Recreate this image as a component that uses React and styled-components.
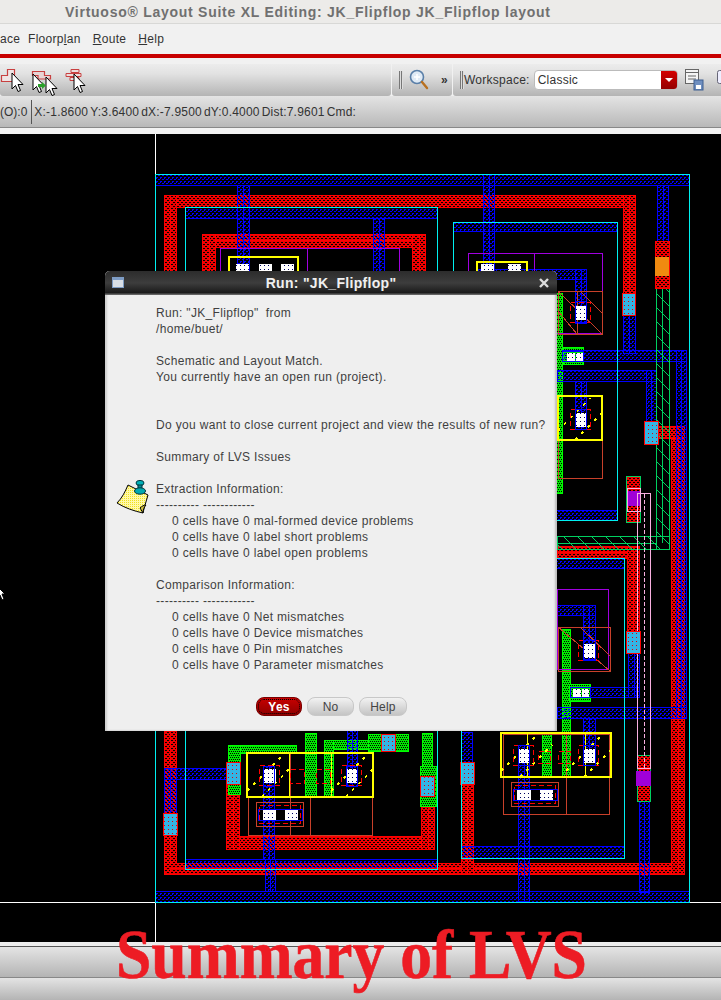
import styled, { createGlobalStyle } from "styled-components";

const GlobalStyle = createGlobalStyle`
  html, body {
    margin: 0;
    padding: 0;
    background: #000;
    overflow: hidden;
  }
`;

const Page = styled.div`
  position: relative;
  width: 721px;
  height: 1000px;
  overflow: hidden;
  display: flex;
  flex-direction: column;
  background: #f1f1f1;
  font-family: "Liberation Sans", Arial, sans-serif;
  color: #3c3c3c;
`;

const TitleBar = styled.div`
  height: 23px;
  background: #ecebe9;
  border-bottom: 1px solid #d8d8d6;
  display: flex;
  align-items: center;
  padding-left: 65px;
  font-size: 14px;
  font-weight: 700;
  letter-spacing: 0.74px;
  color: #707070;
  white-space: nowrap;
`;

const MenuBar = styled.div`
  height: 29px;
  background: #f1f1f1;
  display: flex;
  align-items: center;
  gap: 12px;
  font-size: 12px;
  letter-spacing: 0.3px;
  color: #333;
`;

const MenuItem = styled.span`
  &:first-child { width: 16px; }
  u { text-underline-offset: 1px; }
`;

const RedRule = styled.div`
  height: 4px;
  margin-top: 1px;
  background: #c80000;
`;

const ToolStrip = styled.div`
  height: 32px;
  margin-top: 6px;
  display: flex;
  gap: 1px;
  background: #f1f1f1;
`;

const ToolGroup = styled.div`
  width: ${(p) => p.$width}px;
  flex: ${(p) => (p.$grow ? 1 : "none")};
  box-sizing: border-box;
  background: linear-gradient(#ececec, #e2e2e2 30%, #b4b4b4);
  border-radius: 0 0 3px 3px;
  display: flex;
  align-items: center;
  gap: ${(p) => p.$gap || 0}px;
  padding-left: ${(p) => p.$pad || 0}px;
  font-size: 12px;
  letter-spacing: 0.25px;
  color: #333;
`;

const Grip = styled.span`
  width: 4px;
  height: 18px;
  flex: none;
  background: repeating-linear-gradient(90deg, #777 0 1px, #ddd 1px 2px);
`;

const Overflow = styled.span`
  margin-left: 6px;
  font-weight: 700;
`;

const Combo = styled.div`
  width: 144px;
  height: 20px;
  margin-left: 4px;
  margin-right: 6px;
  background: #fff;
  border: 1px solid #bbb;
  border-radius: 4px;
  box-sizing: border-box;
  display: flex;
  align-items: center;
  justify-content: space-between;
  padding-left: 3px;
  overflow: hidden;
  flex: none;
`;

const ComboArrow = styled.span`
  width: 16px;
  height: 20px;
  background: linear-gradient(#d80000, #900000);
  display: flex;
  align-items: center;
  justify-content: center;
  &::after {
    content: "";
    border-left: 4px solid transparent;
    border-right: 4px solid transparent;
    border-top: 4px solid #fff;
  }
`;

const StatusBar = styled.div`
  height: 32px;
  box-sizing: border-box;
  background: linear-gradient(#e4e4e4, #b8b8b8);
  border-bottom: 1px solid #888;
  display: flex;
  align-items: center;
  font-size: 12px;
  letter-spacing: 0.2px;
  white-space: nowrap;
  color: #333;
`;

const StatusCell = styled.span`
  margin-right: 2px;
  ${(p) => p.$divided && "border-right: 1px solid #555; padding-right: 4px; height: 24px; line-height: 24px; letter-spacing: 0;"}
`;

const Gap = styled.div`
  height: 6px;
  background: #f2f2f2;
`;

const Canvas = styled.svg`
  display: block;
  width: 721px;
  height: 808px;
  background: #000;
  flex: none;
`;

const BottomBars = styled.div`
  flex: 1;
  display: flex;
  flex-direction: column;
  background: #ececec;
  padding-top: 4px;
`;

const BottomBar = styled.div`
  flex: ${(p) => p.$size} 0 0;
  background: linear-gradient(#e4e4e4, #b4b4b4);
  border-top: 1px solid ${(p) => p.$line};
`;

const Dialog = styled.div`
  position: absolute;
  left: 105px;
  top: 271px;
  width: 452px;
  height: 460px;
  display: flex;
  flex-direction: column;
  background: #efefef;
  border-radius: 5px 5px 0 0;
  overflow: hidden;
  box-shadow: inset -2px 0 2px #bdbdbd, inset 2px 0 2px #cfcfcf;
`;

const DialogHead = styled.div`
  height: 24px;
  flex: none;
  background: linear-gradient(#2c2c2c, #3d3d3d 50%, #1b1b1b 90%, #777);
  display: flex;
  align-items: center;
  justify-content: center;
  position: relative;
  font-size: 14px;
  font-weight: 700;
  letter-spacing: 0.3px;
  color: #f0f0f0;
`;

const WindowGlyph = styled.span`
  position: absolute;
  left: 7px;
  top: 6px;
  width: 12px;
  height: 11px;
  border: 1px solid #7e9cc4;
  border-top-width: 3px;
  box-sizing: border-box;
  background: #d9dfe6;
`;

const CloseGlyph = styled.svg`
  position: absolute;
  right: 8px;
  top: 7px;
`;

const DialogBody = styled.div`
  flex: 1;
  position: relative;
  padding: 10px 0 0 51px;
`;

const NoteIcon = styled.svg`
  position: absolute;
  left: 11px;
  top: 183px;
`;

const Message = styled.div`
  font: 12px/16px "Liberation Sans", Arial, sans-serif;
  letter-spacing: 0.33px;
  color: #3f3f3f;
`;

const MessageLine = styled.div`
  height: 16px;
  white-space: pre;
  padding-left: ${(p) => (p.$indent ? 16 : 0)}px;
`;

const ButtonRow = styled.div`
  height: 44px;
  flex: none;
  display: flex;
  gap: 5px;
  padding-left: 151px;
  padding-top: 10px;
  box-sizing: border-box;
`;

const Btn = styled.button`
  width: ${(p) => p.$width}px;
  height: 19px;
  padding: 0;
  border-radius: 8px;
  font: ${(p) => (p.$primary ? "700" : "400")} 12px "Liberation Sans", Arial, sans-serif;
  letter-spacing: 0.2px;
  color: ${(p) => (p.$primary ? "#fff" : "#444")};
  background: ${(p) => (p.$primary ? "linear-gradient(#c80000, #8e0000)" : "linear-gradient(#f2f2f2, #c4c4c4)")};
  border: 1px solid ${(p) => (p.$primary ? "#7a0000" : "#c8c8c8")};
  ${(p) => p.$primary && "outline: 1px dotted #000; outline-offset: -3px;"}
`;

const Caption = styled.div`
  position: absolute;
  left: 116px;
  top: 915px;
  font: 700 70px/80px "Liberation Serif", "Times New Roman", serif;
  color: #ed1c24;
  -webkit-text-stroke: 0.6px #ed1c24;
  white-space: nowrap;
  transform-origin: left top;
  transform: scaleX(0.908);
`;

// x, y, w, h for each layer of the cell layout
const BLUE = [
  [155, 173, 534, 11], [155, 890, 534, 11], [185, 206, 252, 11], [185, 858, 252, 10],
  [453, 221, 164, 9], [453, 509, 164, 10], [461, 557, 163, 10], [461, 845, 163, 12],
  [237, 184, 12, 86], [373, 217, 11, 54], [483, 173, 11, 97], [478, 268, 108, 10],
  [575, 268, 11, 54], [562, 349, 124, 11], [676, 349, 10, 368], [557, 369, 99, 11],
  [646, 369, 10, 51], [575, 380, 11, 48], [623, 314, 12, 38], [657, 184, 11, 56],
  [557, 706, 129, 11], [557, 604, 38, 10], [583, 604, 12, 54], [590, 686, 46, 10],
  [628, 650, 11, 46], [518, 744, 11, 156], [583, 717, 12, 43], [461, 731, 11, 30],
  [639, 800, 10, 91], [164, 767, 12, 45], [164, 767, 66, 11], [263, 765, 11, 93],
  [265, 858, 10, 32], [347, 725, 10, 60],
];

const RED = [
  [164, 194, 471, 12], [170, 200, 459, 6], [164, 194, 12, 679], [623, 194, 12, 98],
  [202, 233, 223, 13], [208, 239, 211, 7], [202, 233, 13, 40], [412, 233, 13, 40],
  [164, 862, 519, 11], [170, 867, 507, 6], [671, 425, 13, 448], [645, 425, 39, 12],
  [557, 545, 82, 12], [557, 551, 76, 6], [627, 545, 12, 85], [461, 783, 12, 90],
  [226, 835, 208, 13], [232, 835, 196, 7], [226, 783, 13, 65], [421, 795, 13, 53],
];

const GREEN = [
  [556, 292, 6, 200], [562, 628, 8, 147], [228, 744, 68, 8], [228, 744, 12, 49],
  [305, 732, 11, 63], [324, 739, 60, 9], [324, 739, 9, 56], [422, 732, 10, 33],
  [542, 733, 9, 43], [563, 346, 20, 17], [569, 683, 21, 17], [368, 733, 40, 17], [420, 765, 16, 40],
];

const VIAS = [
  [622, 292, 13, 22], [644, 420, 14, 23], [626, 630, 14, 22], [460, 761, 14, 22],
  [163, 812, 14, 22], [226, 761, 14, 22], [420, 775, 14, 20], [381, 733, 14, 17],
];

const CONTACTS = [
  [574, 304, 12, 14], [574, 411, 12, 14], [582, 642, 12, 14], [517, 747, 12, 14],
  [582, 747, 12, 14], [263, 767, 12, 14], [345, 767, 12, 14], [262, 807, 13, 12],
  [284, 807, 13, 12], [516, 787, 14, 12], [539, 787, 13, 12], [566, 351, 8, 9],
  [575, 351, 7, 9], [572, 687, 8, 9], [581, 687, 7, 9], [235, 262, 13, 8], [258, 262, 13, 8],
  [280, 262, 13, 8], [480, 262, 13, 8], [507, 262, 13, 8],
];

const CONTACT_BOXES = [
  [575, 300, 11, 21], [575, 408, 11, 20], [583, 639, 12, 20], [518, 744, 11, 20],
  [583, 744, 12, 20], [263, 765, 11, 20], [346, 765, 11, 20], [562, 350, 21, 10],
  [570, 686, 20, 10], [513, 788, 44, 11], [258, 808, 44, 11],
];

const OUTLINES = [
  ["#00f0f0", 155, 173, 534, 728], ["#00f0f0", 185, 206, 252, 662], ["#00f0f0", 453, 221, 164, 298],
  ["#00f0f0", 461, 557, 163, 300],
  ["#a000e0", 220, 247, 179, 40], ["#a000e0", 307, 247, 92, 40], ["#a000e0", 468, 252, 134, 80],
  ["#a000e0", 534, 252, 68, 80], ["#a000e0", 557, 588, 51, 80],
  ["#c8402a", 558, 290, 44, 43], ["#c8402a", 577, 290, 25, 43], ["#c8402a", 558, 439, 44, 38],
  ["#c8402a", 558, 626, 52, 44], ["#c8402a", 503, 733, 106, 80], ["#c8402a", 566, 733, 43, 80],
  ["#c8402a", 290, 752, 82, 82], ["#c8402a", 248, 796, 124, 38], ["#c8402a", 310, 796, 62, 38],
  ["#c8402a", 511, 781, 47, 24], ["#c8402a", 256, 801, 47, 24],
];

const YELLOW_BOXES = [
  [229, 256, 69, 30], [477, 261, 50, 30], [558, 395, 44, 44], [501, 732, 110, 44],
  [247, 752, 126, 44],
];

const DASHED = [
  [570, 301, 20, 20], [570, 408, 20, 20], [578, 639, 20, 20], [513, 744, 20, 20],
  [578, 744, 20, 20], [259, 764, 20, 20], [341, 764, 20, 20], [290, 768, 14, 14],
  [316, 768, 14, 14], [538, 750, 12, 12], [558, 750, 12, 12], [514, 784, 41, 18], [259, 804, 41, 18],
];

const DIAGONALS = [
  [558, 290, 602, 333, "#c8402a"], [558, 310, 577, 333, "#c8402a"], [580, 290, 602, 312, "#c8402a"],
  [558, 626, 610, 670, "#c8402a"], [580, 626, 610, 655, "#c8402a"],
  [558, 430, 590, 397, "#ffff00"], [575, 439, 602, 412, "#ffff00"],
  [247, 790, 285, 752, "#ffff00"], [262, 796, 289, 768, "#ffff00"],
  [331, 790, 369, 752, "#ffff00"], [346, 796, 373, 768, "#ffff00"],
  [501, 770, 539, 732, "#ffff00"], [520, 776, 552, 744, "#ffff00"],
  [566, 770, 604, 732, "#ffff00"], [584, 776, 611, 749, "#ffff00"],
];

const Layer = ({ rows, pattern, stroke, rails }) =>
  rows.map(([x, y, w, h], i) => (
    <g key={i}>
      <rect x={x + 0.5} y={y + 0.5} width={w} height={h} fill={`url(#${pattern})`} stroke={stroke} />
      {rails && h > 30 && w < 14 && (
        <line x1={x + Math.round(w / 2) + 0.5} y1={y} x2={x + Math.round(w / 2) + 0.5} y2={y + h} stroke={stroke} />
      )}
    </g>
  ));

const LayoutDrawing = () => (
  <Canvas viewBox="0 133 721 808" shapeRendering="crispEdges">
    <defs>
      <pattern id="blueDots" width="4" height="4" patternUnits="userSpaceOnUse">
        <path d="M0 0h2v1H0zM2 2h2v1H2zM0 1h1v1H0z" fill="#0000ff" />
      </pattern>
      <pattern id="redDots" width="4" height="4" patternUnits="userSpaceOnUse">
        <rect width="4" height="4" fill="#f00000" />
        <path d="M1 1h2v1H1zM3 3h1v1H3zM0 3h1v1H0z" fill="#000" />
      </pattern>
      <pattern id="greenDots" width="4" height="4" patternUnits="userSpaceOnUse">
        <rect width="4" height="4" fill="#00e800" />
        <path d="M0 0h1v1H0zM2 0h1v1H2zM1 2h1v1H1zM3 2h1v1H3z" fill="#000" />
      </pattern>
      <pattern id="viaFill" width="4" height="4" patternUnits="userSpaceOnUse">
        <rect width="4" height="4" fill="#33b5e5" />
        <rect width="1" height="1" fill="#e00000" />
      </pattern>
      <pattern id="whiteDots" width="4" height="4" patternUnits="userSpaceOnUse">
        <rect width="4" height="4" fill="#fff" />
        <rect width="1" height="1" fill="#000060" />
      </pattern>
      <pattern id="greenHatch" width="14" height="14" patternUnits="userSpaceOnUse">
        <path d="M0 0l14 14" stroke="#00d060" fill="none" />
      </pattern>
    </defs>

    <path d="M155.5 133v808M0 901.5h721" stroke="#fff" fill="none" />
    <Layer rows={RED} pattern="redDots" stroke="#ff0000" rails />
    <Layer rows={GREEN} pattern="greenDots" stroke="#00ff00" />
    <Layer rows={BLUE} pattern="blueDots" stroke="#0000ff" rails />

    {/* green hatched strap and via stacks on the right */}
    <rect x="656.5" y="252.5" width="13" height="296" fill="url(#greenHatch)" stroke="#00d060" />
    <rect x="557.5" y="535.5" width="112" height="13" fill="url(#greenHatch)" stroke="#00d060" />
    <path d="M656 542H557M662.5 253V542" stroke="#00d060" fill="none" />
    <rect x="655.5" y="240.5" width="14" height="47" fill="url(#redDots)" stroke="#ff0000" />
    <rect x="655" y="256" width="14" height="19" fill="#f08a10" />
    <rect x="626.5" y="475.5" width="14" height="46" fill="url(#redDots)" stroke="#00d060" />
    <rect x="627" y="490" width="14" height="15" fill="#a000d8" />
    <rect x="637.5" y="754.5" width="13" height="46" fill="url(#redDots)" stroke="#00d060" />
    <rect x="636" y="770" width="15" height="15" fill="#a000d8" />
    <path d="M627.5 487.5H640V510H627.5ZM637.5 492.5H650.5V767H637.5Z" stroke="#f8b0e0" fill="none" />
    <path d="M644 493V767" stroke="#f8b0e0" strokeDasharray="4 2" fill="none" />

    <Layer rows={VIAS} pattern="viaFill" stroke="#ff0000" />
    {OUTLINES.map(([color, x, y, w, h], i) => (
      <rect key={i} x={x + 0.5} y={y + 0.5} width={w} height={h} fill="none" stroke={color} />
    ))}
    {YELLOW_BOXES.map(([x, y, w, h], i) => (
      <rect key={i} x={x} y={y} width={w} height={h} fill="none" stroke="#ffff00" strokeWidth="2" />
    ))}
    <path d="M527.5 732V776M585.5 732V776M289.5 752V796M331.5 752V796" stroke="#ffff00" fill="none" />
    {DIAGONALS.map(([x1, y1, x2, y2, color], i) => (
      <line
        key={i}
        x1={x1}
        y1={y1}
        x2={x2}
        y2={y2}
        stroke={color}
        strokeWidth={color === "#ffff00" ? 1.5 : 1}
        strokeDasharray={color === "#ffff00" ? "3 6" : "none"}
      />
    ))}
    {DASHED.map(([x, y, w, h], i) => (
      <rect key={i} x={x + 0.5} y={y + 0.5} width={w} height={h} fill="none" stroke="#ff0000" strokeDasharray="5 3" />
    ))}
    <Layer rows={CONTACTS} pattern="whiteDots" stroke="none" />
    {CONTACT_BOXES.map(([x, y, w, h], i) => (
      <rect key={i} x={x + 0.5} y={y + 0.5} width={w} height={h} fill="none" stroke="#0000ff" />
    ))}

    {/* stray pointer at the left edge */}
    <path d="M-2 586l7 7h-3l2 5-2 1-2-5-2 2z" fill="#fff" stroke="#000" shapeRendering="auto" />
  </Canvas>
);

const ArrowCursor = ({ x, y }) => (
  <path d={`M${x} ${y}v16l3.5-3.5 2.5 6 2.5-1-2.5-6h5z`} fill="#fff" stroke="#000" />
);

const ToolIcons = () => (
  <svg width="90" height="32" viewBox="0 0 90 32">
    <path d="M7.5 5.5H14.5V17.5H1.5V11.5H7.5Z" fill="#efe4e4" stroke="#c84040" strokeWidth="1.2" />
    <ArrowCursor x={12} y={9} />
    <path d="M32.5 7.5H44.5V11.5H50.5V15H38V11.5H32.5Z" fill="#e8d4d4" stroke="#c84040" strokeWidth="1.2" />
    <ArrowCursor x={33} y={10} />
    <ArrowCursor x={46} y={13} />
    <path d="M38 20h4v-2l4 3.5-4 3.5v-2h-4z" fill="#2aa02a" />
    <path d="M71 5.5h8v3h-8zM66 9.5h15v3H66zM70 13.5h9v3h-9z" fill="#ecdcdc" stroke="#c84040" />
    <ArrowCursor x={74} y={10} />
  </svg>
);

const Magnifier = () => (
  <svg width="20" height="22" viewBox="0 0 20 22">
    <circle cx="8" cy="8" r="6.5" fill="#dfeaf5" stroke="#5a7fa8" strokeWidth="1.6" />
    <path d="M8 5v6M5 8h6" stroke="#fff" strokeWidth="1.5" />
    <path d="M13 13l5 6" stroke="#b87020" strokeWidth="2.4" strokeLinecap="round" />
  </svg>
);

const SaveIcon = () => (
  <svg width="22" height="24" viewBox="0 0 22 24">
    <rect x="1.5" y="1.5" width="13" height="14" fill="#f4f4f4" stroke="#666" />
    <path d="M1 4.5h14M4 8h8M4 11h8" stroke="#666" />
    <rect x="10" y="12" width="9" height="10" fill="#6f8fc0" stroke="#3f5f90" />
    <rect x="12" y="17" width="5" height="4" fill="#fff" />
  </svg>
);

const WindowIcon = styled.svg`
  margin-left: 10px;
  flex: none;
`;

const Note = () => (
  <NoteIcon width="36" height="38" viewBox="0 0 36 38">
    <defs>
      <pattern id="noteFill" width="2" height="2" patternUnits="userSpaceOnUse">
        <rect width="2" height="2" fill="#fff9a8" />
        <rect width="1" height="1" fill="#f0e020" />
      </pattern>
    </defs>
    <path d="M12 7L32 17C30 24 28 30 27 35C18 33 9 30 1 25C6 20 9 14 12 7Z" fill="url(#noteFill)" stroke="#000" />
    <path d="M27 35C27 32 28 29 30 27C28 27 26 28 24 30Z" fill="#cfc040" stroke="#000" />
    <ellipse cx="24" cy="5" rx="4" ry="2.6" fill="#00b0b8" stroke="#003840" />
    <rect x="22" y="7" width="4" height="5" fill="#008890" stroke="#003840" />
    <ellipse cx="24" cy="13" rx="5.5" ry="3.2" fill="#00a8b0" stroke="#003840" />
  </NoteIcon>
);

const MESSAGE_LINES = [
  ['Run: "JK_Flipflop"  from'],
  ["/home/buet/"],
  [""],
  ["Schematic and Layout Match."],
  ["You currently have an open run (project)."],
  [""],
  [""],
  ["Do you want to close current project and view the results of new run?"],
  [""],
  ["Summary of LVS Issues"],
  [""],
  ["Extraction Information:"],
  ["---------- ------------"],
  ["0 cells have 0 mal-formed device problems", true],
  ["0 cells have 0 label short problems", true],
  ["0 cells have 0 label open problems", true],
  [""],
  ["Comparison Information:"],
  ["---------- ------------"],
  ["0 cells have 0 Net mismatches", true],
  ["0 cells have 0 Device mismatches", true],
  ["0 cells have 0 Pin mismatches", true],
  ["0 cells have 0 Parameter mismatches", true],
];

const App = () => (
  <Page>
    <GlobalStyle />
    <TitleBar>Virtuoso® Layout Suite XL Editing: JK_Flipflop JK_Flipflop layout</TitleBar>
    <MenuBar>
      <MenuItem>ace</MenuItem>
      <MenuItem>Floorp<u>l</u>an</MenuItem>
      <MenuItem><u>R</u>oute</MenuItem>
      <MenuItem><u>H</u>elp</MenuItem>
    </MenuBar>
    <RedRule />
    <ToolStrip>
      <ToolGroup $width={391}>
        <ToolIcons />
      </ToolGroup>
      <ToolGroup $width={60} $pad={7} $gap={6}>
        <Grip />
        <Magnifier />
        <Overflow>»</Overflow>
      </ToolGroup>
      <ToolGroup $grow $pad={7}>
        <Grip />
        <span>Workspace:</span>
        <Combo>
          <span>Classic</span>
          <ComboArrow />
        </Combo>
        <SaveIcon />
        <WindowIcon width="16" height="24" viewBox="0 0 16 24">
          <rect x="1.5" y="2.5" width="16" height="13" rx="2" fill="#eef" stroke="#667" />
          <path d="M6 16l2 4 3-4" fill="#ccd" stroke="#667" />
        </WindowIcon>
      </ToolGroup>
    </ToolStrip>
    <StatusBar>
      <StatusCell $divided>(O):0</StatusCell>
      <StatusCell>X:-1.8600</StatusCell>
      <StatusCell>Y:3.6400</StatusCell>
      <StatusCell>dX:-7.9500</StatusCell>
      <StatusCell>dY:0.4000</StatusCell>
      <StatusCell>Dist:7.9601</StatusCell>
      <StatusCell>Cmd:</StatusCell>
    </StatusBar>
    <Gap />
    <LayoutDrawing />
    <BottomBars>
      <BottomBar $size={31} $line="#555" />
      <BottomBar $size={22} $line="#888" />
    </BottomBars>

    <Dialog>
      <DialogHead>
        <WindowGlyph />
        Run: "JK_Flipflop"
        <CloseGlyph width="10" height="10" viewBox="0 0 10 10">
          <path d="M1 1l8 8M9 1l-8 8" stroke="#ddd" strokeWidth="2.4" />
        </CloseGlyph>
      </DialogHead>
      <DialogBody>
        <Note />
        <Message>
          {MESSAGE_LINES.map(([text, indent], i) => (
            <MessageLine key={i} $indent={indent}>{text}</MessageLine>
          ))}
        </Message>
      </DialogBody>
      <ButtonRow>
        <Btn $primary $width={46}>Yes</Btn>
        <Btn $width={47}>No</Btn>
        <Btn $width={48}>Help</Btn>
      </ButtonRow>
    </Dialog>

    <Caption>Summary of LVS</Caption>
  </Page>
);

export default App;
